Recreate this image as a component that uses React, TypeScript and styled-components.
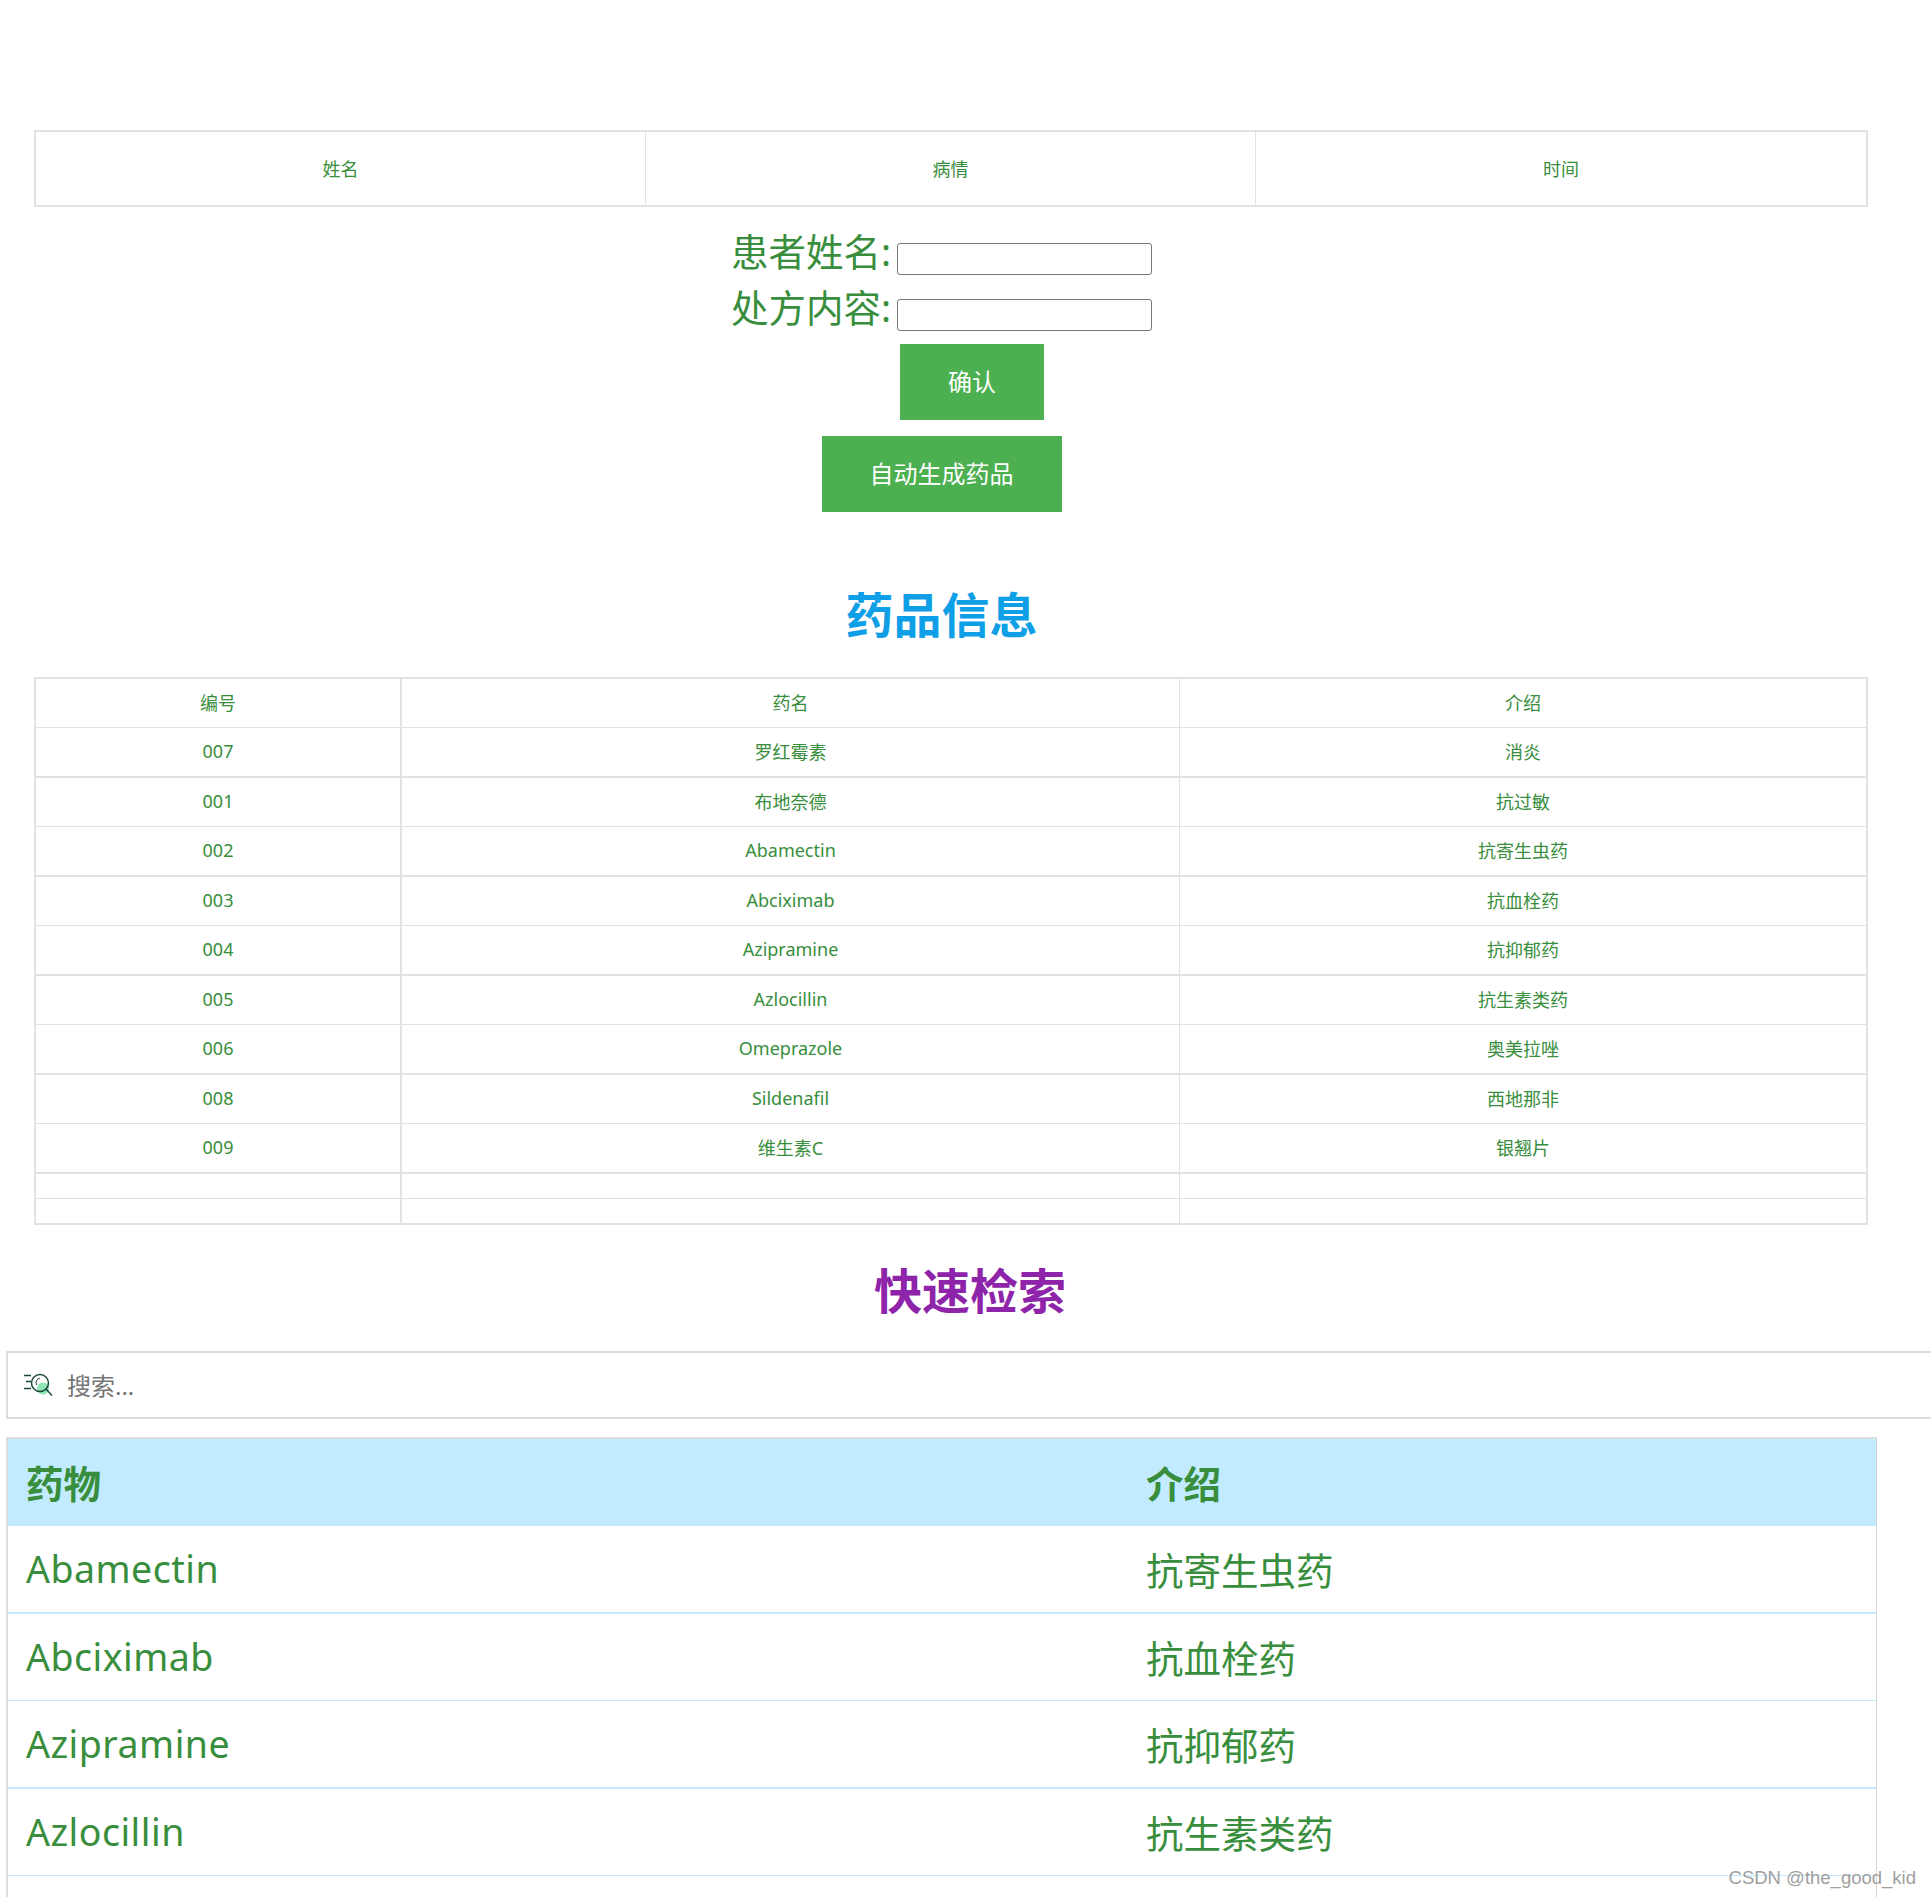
import React from 'react';
import styled, { createGlobalStyle } from 'styled-components';

const GlobalStyle = createGlobalStyle`
  html, body {
    margin: 0;
    padding: 0;
    background: #fff;
    overflow: hidden;
  }
  body {
    font-family: "Noto Sans", "Noto Sans CJK SC", sans-serif;
    color: #388e3c;
  }
`;

const Page = styled.div`
  position: relative;
  width: 1931px;
  height: 1897px;
  overflow: hidden;
  padding-top: 130px;
  box-sizing: border-box;
`;

const GridTable = styled.table`
  margin-left: 34px;
  width: 1834px;
  table-layout: fixed;
  border-collapse: separate;
  border-spacing: 0;
  border: 2px solid #e2e2e2;
  box-sizing: border-box;
  font-size: 18px;
`;

const PatientCell = styled.td`
  height: 71px;
  padding: 0 0 2px;
  text-align: center;
  border-right: 1px solid #e2e2e2;

  &:last-child {
    border-right: 0;
  }
`;

const Form = styled.form`
  width: 1883px;
  display: flex;
  flex-direction: column;
  align-items: center;
  margin-top: 17px;
`;

const FormBody = styled.div`
  width: 421px;
`;

const Field = styled.div`
  display: flex;
  align-items: flex-end;
  gap: 7px;
  height: 56px;
`;

const Label = styled.label`
  width: 159px;
  font-size: 37.5px;
  line-height: 50px;
  text-align: right;
  white-space: nowrap;
  position: relative;
  top: -3px;
`;

const TextInput = styled.input`
  width: 255px;
  height: 32px;
  box-sizing: border-box;
  border: 1px solid #767676;
  border-radius: 3px;
  padding: 1px 2px;
  margin-bottom: 5px;
`;

const GreenButton = styled.button<{ $width: number }>`
  display: block;
  width: ${({ $width }) => $width}px;
  height: 76px;
  border: 0;
  padding: 0 0 4px;
  background: #4caf50;
  color: #fff;
  font-family: inherit;
  font-size: 24px;
`;

const ConfirmButton = styled(GreenButton)`
  margin: 8px 0 0 169px;
`;

const GenerateButton = styled(GreenButton)`
  margin-top: 16px;
`;

const Heading = styled.h2<{ $color: string; $offset: number }>`
  width: 1883px;
  margin: 0;
  padding-left: ${({ $offset }) => $offset}px;
  box-sizing: border-box;
  text-align: center;
  color: ${({ $color }) => $color};
  font-size: 48px;
  font-weight: 700;
  line-height: 70px;
`;

const DrugHeading = styled(Heading)`
  margin: 68px 0 27px;
`;

const SearchHeading = styled(Heading)`
  margin: 31px 0 25px;
`;

const DrugCell = styled.td`
  height: 45px;
  padding: 0 0 3px;
  text-align: center;
  border-right: 1px solid #e2e2e2;
  border-bottom: 1px solid #e2e2e2;

  &:first-child {
    border-right-width: 2px;
  }
  &:last-child {
    border-right: 0;
  }
  tr:nth-child(even) > & {
    border-bottom-width: 2px;
  }
  tr:last-child > & {
    border-bottom: 0;
  }
`;

const EmptyCell = styled(DrugCell)`
  height: 24px;
  padding: 0;
`;

const SearchBar = styled.div`
  margin: 0 0 18px 6px;
  width: 1925px;
  height: 68px;
  box-sizing: border-box;
  border: 2px solid #ddd;
  border-right: 0;
  display: flex;
  align-items: center;
  gap: 14px;
  padding-left: 15px;
`;

const SearchField = styled.input`
  flex: 1;
  border: 0;
  outline: 0;
  padding: 0;
  font-family: inherit;
  font-size: 24px;
  color: #555;
  background: transparent;

  &::placeholder {
    color: #757575;
    opacity: 1;
  }
`;

const ResultTable = styled.table`
  margin-left: 6px;
  width: 1871px;
  table-layout: fixed;
  border-collapse: separate;
  border-spacing: 0;
  border-left: 2px solid #ddd;
  border-right: 1px solid #d5d5d5;
  border-top: 2px solid #ddd;
  box-sizing: border-box;
  font-size: 37.5px;
`;

const HeaderRow = styled.tr`
  background: #c2ebff;
`;

const HeaderCell = styled.th<{ $wide?: boolean }>`
  height: 84px;
  padding: 0 0 3px 18px;
  text-align: left;
  font-weight: 700;
  font-size: 37.5px;
  width: ${({ $wide }) => ($wide ? '1102px' : 'auto')};
`;

const ResultCell = styled.td`
  height: 84px;
  padding: 0 0 2px 18px;
  border-bottom: 1px solid #c2ebff;

  tr:nth-child(odd) > & {
    border-bottom-width: 2px;
  }
`;

const ResultName = styled(ResultCell)`
  letter-spacing: 0.5px;
`;

const Watermark = styled.div`
  position: absolute;
  right: 15px;
  bottom: 8px;
  font-family: "Liberation Sans", sans-serif;
  font-size: 18.5px;
  color: #a0a0a0;
`;

const drugs = [
  ['007', '罗红霉素', '消炎'],
  ['001', '布地奈德', '抗过敏'],
  ['002', 'Abamectin', '抗寄生虫药'],
  ['003', 'Abciximab', '抗血栓药'],
  ['004', 'Azipramine', '抗抑郁药'],
  ['005', 'Azlocillin', '抗生素类药'],
  ['006', 'Omeprazole', '奥美拉唑'],
  ['008', 'Sildenafil', '西地那非'],
  ['009', '维生素C', '银翘片'],
];

const results = [
  ['Abamectin', '抗寄生虫药'],
  ['Abciximab', '抗血栓药'],
  ['Azipramine', '抗抑郁药'],
  ['Azlocillin', '抗生素类药'],
];

const SearchIcon = () => (
  <svg width="30" height="24" viewBox="0 0 30 24" fill="none">
    <circle cx="20" cy="15.5" r="6" fill="#8fe6b5" />
    <path d="M1 2.5h7M3 8.5h5M1 15.5h7" stroke="#1c4a3a" strokeWidth="1.3" />
    <circle cx="17" cy="10" r="8.5" stroke="#1c4a3a" strokeWidth="1.5" />
    <path d="M17 5a5 5 0 0 0-3.5 7" stroke="#1c4a3a" strokeWidth="1" />
    <path d="M23 16l6 6.5" stroke="#1c4a3a" strokeWidth="1.5" />
  </svg>
);

export default function App() {
  return (
    <Page>
      <GlobalStyle />
      <GridTable>
        <tbody>
          <tr>
            <PatientCell>姓名</PatientCell>
            <PatientCell>病情</PatientCell>
            <PatientCell>时间</PatientCell>
          </tr>
        </tbody>
      </GridTable>

      <Form onSubmit={(e) => e.preventDefault()}>
        <FormBody>
          <Field>
            <Label>患者姓名:</Label>
            <TextInput />
          </Field>
          <Field>
            <Label>处方内容:</Label>
            <TextInput />
          </Field>
          <ConfirmButton $width={144}>确认</ConfirmButton>
        </FormBody>
        <GenerateButton $width={240}>自动生成药品</GenerateButton>
      </Form>

      <DrugHeading $color="#0f9fe6" $offset={0}>药品信息</DrugHeading>

      <GridTable>
        <colgroup>
          <col width="366" />
          <col width="778" />
          <col />
        </colgroup>
        <tbody>
          <tr>
            <DrugCell>编号</DrugCell>
            <DrugCell>药名</DrugCell>
            <DrugCell>介绍</DrugCell>
          </tr>
          {drugs.map((drug) => (
            <tr key={drug[0]}>
              <DrugCell>{drug[0]}</DrugCell>
              <DrugCell>{drug[1]}</DrugCell>
              <DrugCell>{drug[2]}</DrugCell>
            </tr>
          ))}
          <tr>
            <EmptyCell />
            <EmptyCell />
            <EmptyCell />
          </tr>
          <tr>
            <EmptyCell />
            <EmptyCell />
            <EmptyCell />
          </tr>
        </tbody>
      </GridTable>

      <SearchHeading $color="#8e24aa" $offset={57}>快速检索</SearchHeading>

      <SearchBar>
        <SearchIcon />
        <SearchField placeholder="搜索..." />
      </SearchBar>

      <ResultTable>
        <thead>
          <HeaderRow>
            <HeaderCell $wide>药物</HeaderCell>
            <HeaderCell>介绍</HeaderCell>
          </HeaderRow>
        </thead>
        <tbody>
          {results.map((row) => (
            <tr key={row[0]}>
              <ResultName>{row[0]}</ResultName>
              <ResultCell>{row[1]}</ResultCell>
            </tr>
          ))}
          <tr>
            <ResultCell />
            <ResultCell />
          </tr>
        </tbody>
      </ResultTable>

      <Watermark>CSDN @the_good_kid</Watermark>
    </Page>
  );
}
